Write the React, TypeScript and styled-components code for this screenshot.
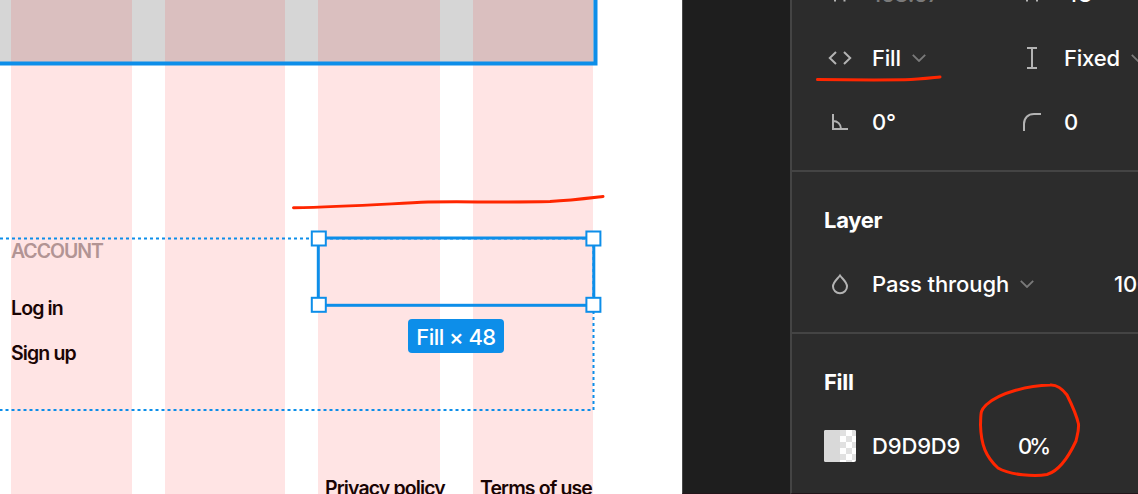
import React from "react";
import styled, { createGlobalStyle } from "styled-components";

const Global = createGlobalStyle`
  body { margin: 0; overflow: hidden; background: #fff; }
  * { box-sizing: border-box; }
`;

const BLUE = "#0d8ee9";
const RED = "#ff2600";

const Editor = styled.div`
  position: relative;
  display: flex;
  width: 1138px;
  height: 494px;
  overflow: hidden;
  font-family: Inter, "Liberation Sans", sans-serif;
`;

const Canvas = styled.main`
  position: relative;
  flex: none;
  width: 682px;
  background: #fff;
  overflow: hidden;
`;

const HeroFrame = styled.div`
  height: 63px;
  width: 595px;
  background: #d6d6d6;
`;

const ColumnGrid = styled.div`
  position: absolute;
  inset: 0;
  display: grid;
  grid-template-columns: 121px 120px 122px 120px;
  column-gap: 33px;
  padding-left: 11px;
`;

const Column = styled.div`
  background: rgba(255, 0, 0, 0.105);
`;

const CanvasText = styled.span<{ $x: number; $y: number; $muted?: boolean; $ls?: number }>`
  position: absolute;
  left: ${(p) => p.$x}px;
  top: ${(p) => p.$y}px;
  font-size: 19.5px;
  line-height: 24px;
  font-weight: 600;
  letter-spacing: ${(p) => p.$ls ?? -0.88}px;
  color: ${(p) => (p.$muted ? "#b29494" : "#1a0404")};
  white-space: nowrap;
`;

const Overlay = styled.svg`
  position: absolute;
  left: 0;
  top: 0;
  pointer-events: none;
`;

const SizeBadge = styled.div`
  position: absolute;
  left: 408px;
  top: 319px;
  width: 96px;
  height: 34px;
  padding-top: 2px;
  display: flex;
  align-items: center;
  justify-content: center;
  border-radius: 4px;
  background: ${BLUE};
  color: #fff;
  font-size: 22px;
  font-weight: 500;
  letter-spacing: -0.55px;
  white-space: nowrap;
`;

const Gutter = styled.div`
  flex: none;
  width: 108px;
  border-left: 1px solid #484848;
  border-bottom: 1px solid #22151a;
  background: #1e1e1e;
`;

const Panel = styled.aside`
  flex: 1;
  min-width: 0;
  border-left: 2px solid #444;
  border-bottom: 1px solid #22151a;
  background: #2c2c2c;
  color: #fff;
  overflow: hidden;
`;

const Section = styled.section<{ $scrolled?: boolean }>`
  padding: ${(p) => (p.$scrolled ? "0 0 16px" : "16px 0")};
  margin-top: ${(p) => (p.$scrolled ? "-38px" : "0")};
  border-top: ${(p) => (p.$scrolled ? "none" : "2px solid #444")};
  height: ${(p) => (p.$scrolled ? "208px" : "162px")};
`;

const Row = styled.div`
  display: flex;
  height: 64px;
`;

const TitleRow = styled.h2`
  display: flex;
  align-items: center;
  height: 64px;
  margin: 0;
  padding-left: 32px;
  font-size: 22px;
  font-weight: 700;
  letter-spacing: -0.3px;
`;

const Cell = styled.div<{ $w?: number }>`
  display: flex;
  flex: none;
  align-items: center;
  width: ${(p) => p.$w ?? 192}px;
  padding-left: 32px;
`;

const IconBox = styled.svg`
  flex: none;
  width: 32px;
  height: 32px;
  margin-right: 16px;
  fill: none;
  stroke: #b3b3b3;
  stroke-width: 2;
`;

const Value = styled.span<{ $dim?: boolean; $ls?: number }>`
  font-size: 22px;
  line-height: 32px;
  font-weight: 500;
  letter-spacing: ${(p) => p.$ls ?? -0.2}px;
  color: ${(p) => (p.$dim ? "#7a7a7a" : "#fff")};
  white-space: nowrap;
`;

const ChevronIcon = styled.svg`
  flex: none;
  width: 14px;
  height: 8px;
  margin-left: 11px;
  fill: none;
  stroke: #7a7a7a;
  stroke-width: 1.8;
`;

const Swatch = styled.svg`
  flex: none;
  width: 32px;
  height: 32px;
  margin-right: 16px;
  border-radius: 2px;
`;

const Chevron = () => (
  <ChevronIcon viewBox="0 0 14 8">
    <path d="M0.8 0.8 L7 7 L13.2 0.8" />
  </ChevronIcon>
);

const handles = [
  [318.8, 238.5],
  [593.4, 238.5],
  [318.8, 304.8],
  [593.4, 304.8],
];

export default function App() {
  return (
    <Editor>
      <Global />
      <Canvas>
        <HeroFrame />
        <ColumnGrid>
          <Column />
          <Column />
          <Column />
          <Column />
        </ColumnGrid>
        <CanvasText $x={11} $y={239} $ls={-1.05} $muted>ACCOUNT</CanvasText>
        <CanvasText $x={11} $y={296}>Log in</CanvasText>
        <CanvasText $x={11} $y={341}>Sign up</CanvasText>
        <CanvasText $x={325} $y={476}>Privacy policy</CanvasText>
        <CanvasText $x={480} $y={476}>Terms of use</CanvasText>
        <Overlay width="682" height="494" fill="none" stroke={BLUE}>
          <path d="M-4 63.6 H595.5 V-4" strokeWidth="4" />
          <path d="M0 238.5 H593.5 V410 H0" strokeWidth="2" strokeDasharray="3 3" />
          <rect x="318.3" y="238" width="275.5" height="67.3" strokeWidth="3" />
          {handles.map(([x, y]) => (
            <rect key={`${x}-${y}`} x={x - 7} y={y - 7} width="14" height="14" fill="#fff" strokeWidth="2" />
          ))}
        </Overlay>
        <SizeBadge>Fill × 48</SizeBadge>
      </Canvas>
      <Gutter />
      <Panel>
        <Section $scrolled>
          <Row>
            <Cell>
              <IconBox viewBox="0 0 32 32"><path d="M11 10 V23.500 M20.500 10 V23.500 M11 17 H20.500" /></IconBox>
              <Value $dim>168.67</Value>
            </Cell>
            <Cell>
              <IconBox viewBox="0 0 32 32"><path d="M11 10 V23.500 M21 10 V23.500 M11 17 H21" /></IconBox>
              <Value>48</Value>
            </Cell>
          </Row>
          <Row>
            <Cell>
              <IconBox viewBox="0 0 32 32"><path d="M12 10 L5.800 16 L12 22 M20 10 L26.200 16 L20 22" /></IconBox>
              <Value>Fill</Value>
              <Chevron />
            </Cell>
            <Cell>
              <IconBox viewBox="0 0 32 32"><path d="M11 6 H21 M11 26 H21 M16 6 V26" /></IconBox>
              <Value>Fixed</Value>
              <Chevron />
            </Cell>
          </Row>
          <Row>
            <Cell>
              <IconBox viewBox="0 0 32 32"><path d="M9 8 V23 H24 M9 15 C13.500 15 17 18 17 23" /></IconBox>
              <Value>0°</Value>
            </Cell>
            <Cell>
              <IconBox viewBox="0 0 32 32"><path d="M8 25 V18 C8 12 12 8 18 8 H25" /></IconBox>
              <Value>0</Value>
            </Cell>
          </Row>
        </Section>
        <Section>
          <TitleRow>Layer</TitleRow>
          <Row>
            <Cell $w={290}>
              <IconBox viewBox="0 0 32 32"><path d="M16 7.500 C13.500 11 9 14 9 18.500 A7 6.700 0 0 0 23 18.500 C23 14 18.500 11 16 7.500 Z" /></IconBox>
              <Value $ls={-0.1}>Pass through</Value>
              <Chevron />
            </Cell>
            <Cell>
              <Value>100%</Value>
            </Cell>
          </Row>
        </Section>
        <Section>
          <TitleRow>Fill</TitleRow>
          <Row>
            <Cell $w={194}>
              <Swatch viewBox="0 0 32 32">
                <rect width="32" height="32" fill="#fff" />
                <rect width="16" height="32" fill="#d9d9d9" />
                <path fill="#e1e1e1" d="M16 0h6v6h-6z M28 0h4v6h-4z M22 6h6v6h-6z M16 12h6v6h-6z M28 12h4v6h-4z M22 18h6v6h-6z M16 24h6v6h-6z M28 24h4v6h-4z M22 30h6v2h-6z" />
              </Swatch>
              <Value $ls={-0.15}>D9D9D9</Value>
            </Cell>
            <Cell $w={120}>
              <Value $ls={-3}>0%</Value>
            </Cell>
          </Row>
        </Section>
      </Panel>
      <Overlay width="1138" height="494" fill="none" stroke={RED} strokeWidth="3" strokeLinecap="round">
        <path d="M293.500 207.700 C345 207 385 204 428 202 C470 201.500 500 202.500 550 201.500 C570 200.500 590 198 603 196.500" />
        <path d="M817.500 79.500 C850 80 880 80 905 79.800 C918 79.500 930 78 940 77" />
        <path d="M1076 441 C1077 436 1079 431 1078.500 424 C1076 413 1071 403 1067 395 C1061 387 1056 384.500 1050 385 C1030 385.500 1000 392 986 405 C980 411 981 413 980.500 425 C981 445 986 457 998 468 C1010 475 1035 477 1047 474.500 C1059 471 1069 456 1076 441" />
      </Overlay>
    </Editor>
  );
}
